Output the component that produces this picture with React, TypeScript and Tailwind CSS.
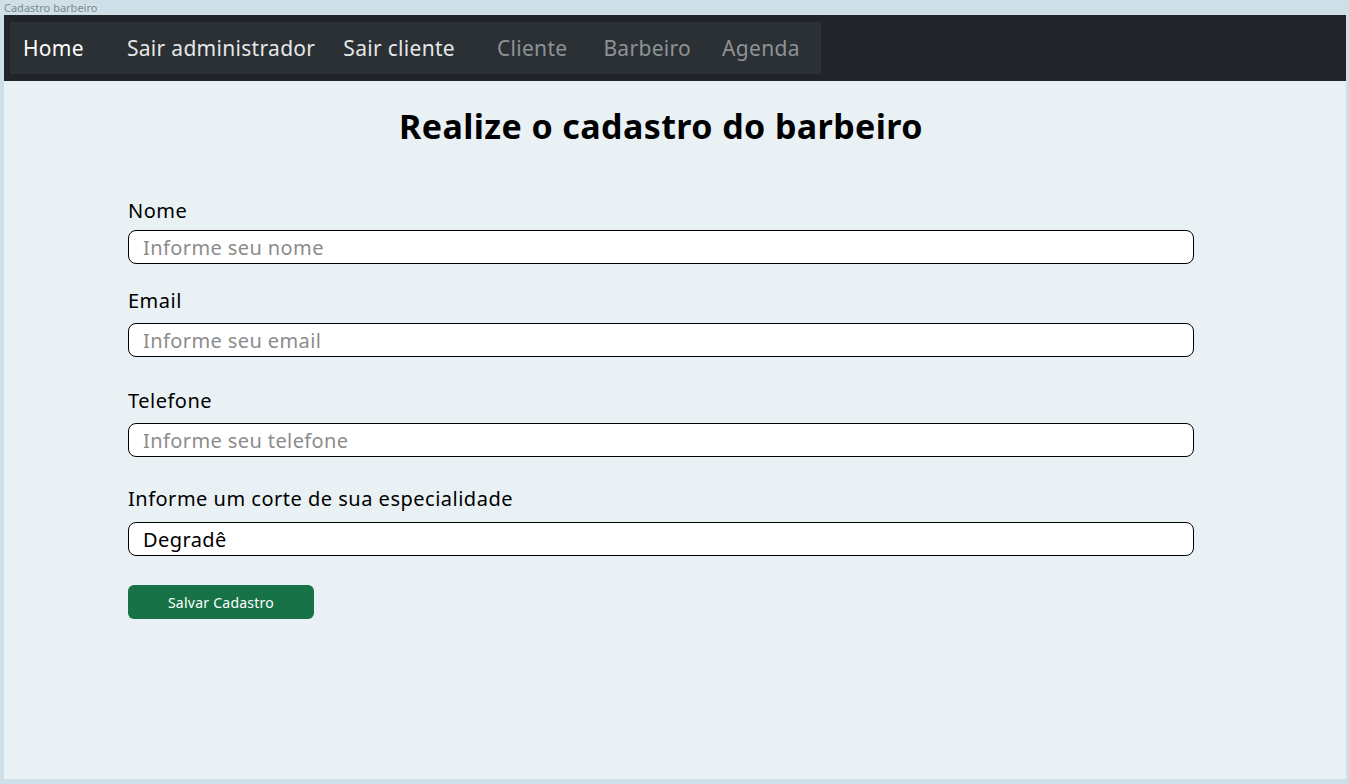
import { useState } from "react";

const font = { fontFamily: "'Noto Sans', Lato, sans-serif" };

function Field(props: { label: string; placeholder: string; value?: string; labelGap: string; className?: string }) {
  const [value, setValue] = useState(props.value ?? "");
  return (
    <div className={props.className}>
      <label className={`block text-[20px] leading-[24px] tracking-[0.5px] text-black ${props.labelGap}`}>
        {props.label}
      </label>
      <input
        value={value}
        onChange={(e) => setValue(e.target.value)}
        placeholder={props.placeholder}
        className="block w-full h-[34px] border border-black rounded-[8px] bg-white px-[14px] text-[20px] tracking-[0.4px] text-black placeholder:text-[#8c8c8c] outline-none"
      />
    </div>
  );
}

export default function App() {
  return (
    <div className="w-full min-h-[784px] bg-[#cfdfe7] flex flex-col" style={font}>
      <div className="h-[15px] pl-[4px] text-[11px] leading-[15px] text-[#7a8a92]">Cadastro barbeiro</div>
      <div className="ml-[4px] mr-[3px] h-[764px] bg-[#e9f1f5]">
        <nav className="h-[66px] bg-[#212529] px-[6px] py-[7px]">
          <div className="w-[811px] h-[52px] pt-[2px] bg-[#2b3035] flex items-center text-[21px] tracking-[0.3px]">
            <a className="ml-[13px] text-white">Home</a>
            <a className="ml-[43px] text-[#e6e7e8]">Sair administrador</a>
            <a className="ml-[28px] text-[#e6e7e8]">Sair cliente</a>
            <a className="ml-[42px] text-[#8e9296]">Cliente</a>
            <a className="ml-[36px] text-[#8e9296]">Barbeiro</a>
            <a className="ml-[31px] text-[#8e9296]">Agenda</a>
          </div>
        </nav>
        <div className="pl-[124px] pr-[152px]">
          <h1 className="mt-[25px] text-center text-[34px] leading-[41px] tracking-[0.4px] font-bold text-black">
            Realize o cadastro do barbeiro
          </h1>
          <form className="mt-[52px]">
            <Field label="Nome" placeholder="Informe seu nome" labelGap="mb-[7px]" />
            <Field label="Email" placeholder="Informe seu email" labelGap="mb-[10px]" className="mt-[25px]" />
            <Field label="Telefone" placeholder="Informe seu telefone" labelGap="mb-[10px]" className="mt-[32px]" />
            <Field label="Informe um corte de sua especialidade" placeholder="" value="Degradê" labelGap="mb-[11px]" className="mt-[30px]" />
            <button
              type="button"
              className="mt-[29px] w-[186px] h-[34px] rounded-[6px] bg-[#177347] text-white text-[14px] tracking-[0.25px]"
            >
              Salvar Cadastro
            </button>
          </form>
        </div>
      </div>
    </div>
  );
}
